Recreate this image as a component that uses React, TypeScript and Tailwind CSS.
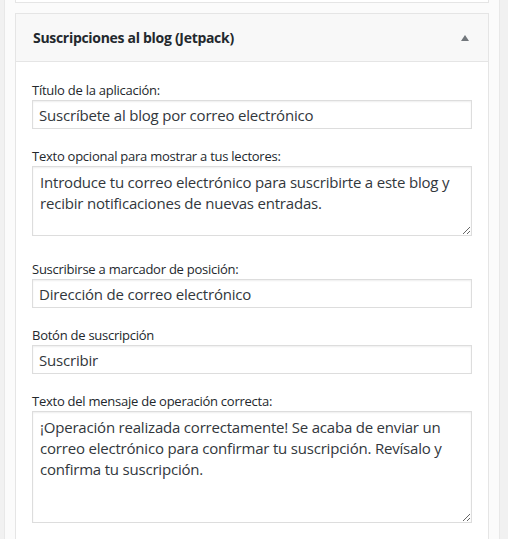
import React from "react";

const font = { fontFamily: '"Open Sans", "Noto Sans", sans-serif' };

function Field({ label, value, className }: { label: string; value: string; className?: string }) {
  return (
    <div className={className}>
      <label className="block text-[13px] leading-[20px] tracking-[-0.25px] text-[#23282d]">{label}</label>
      <input
        readOnly
        value={value}
        className="block w-full h-[29px] border border-[#dddddd] bg-white px-[6px] text-[15px] tracking-[-0.2px] text-[#32373c] outline-none shadow-[inset_0_1px_2px_rgba(0,0,0,0.07)]"
        style={font}
      />
    </div>
  );
}

function Area({ label, value, height, className }: { label: string; value: string; height: string; className?: string }) {
  return (
    <div className={className}>
      <label className="block text-[13px] leading-[20px] tracking-[-0.25px] text-[#23282d]">{label}</label>
      <textarea
        readOnly
        value={value}
        className={`block w-full ${height} border border-[#dddddd] bg-white px-[7px] pt-[5px] text-[15px] leading-[21px] tracking-[-0.2px] text-[#32373c] outline-none shadow-[inset_0_1px_2px_rgba(0,0,0,0.07)]`}
        style={font}
      />
    </div>
  );
}

export default function App() {
  return (
    <div className="w-[508px] h-[539px] overflow-hidden bg-[#f1f1f1] flex" style={font}>
      <div className="ml-[4px] w-[496px] h-full border-x border-[#e8e8e8] bg-[#fbfbfb] px-[10px]">
        {/* previous widget, mostly out of view */}
        <div className="h-[3px] border-x border-b border-[#e5e5e5] bg-white" />

        <div className="mt-[10px] border border-[#e5e5e5] bg-white">
          <div className="h-[48px] flex items-center justify-between pl-[17px] pr-[19px] bg-[#f8f8f8] border-b border-[#e5e5e5]">
            <h3 className="text-[14px] font-bold tracking-[-0.3px] text-[#23282d]">Suscripciones al blog (Jetpack)</h3>
            <span className="w-0 h-0 border-x-[4px] border-x-transparent border-b-[6px] border-b-[#72777c]" />
          </div>

          <div className="px-[16px] pb-[20px]">
            <Field className="mt-[18px]" label="Título de la aplicación:" value="Suscríbete al blog por correo electrónico" />
            <Area
              className="mt-[17px]"
              label="Texto opcional para mostrar a tus lectores:"
              value="Introduce tu correo electrónico para suscribirte a este blog y recibir notificaciones de nuevas entradas."
              height="h-[70px]"
            />
            <Field className="mt-[23px]" label="Suscribirse a marcador de posición:" value="Dirección de correo electrónico" />
            <Field className="mt-[17px]" label="Botón de suscripción" value="Suscribir" />
            <Area
              className="mt-[17px]"
              label="Texto del mensaje de operación correcta:"
              value="¡Operación realizada correctamente! Se acaba de enviar un correo electrónico para confirmar tu suscripción. Revísalo y confirma tu suscripción."
              height="h-[112px]"
            />
          </div>
        </div>
      </div>
    </div>
  );
}
